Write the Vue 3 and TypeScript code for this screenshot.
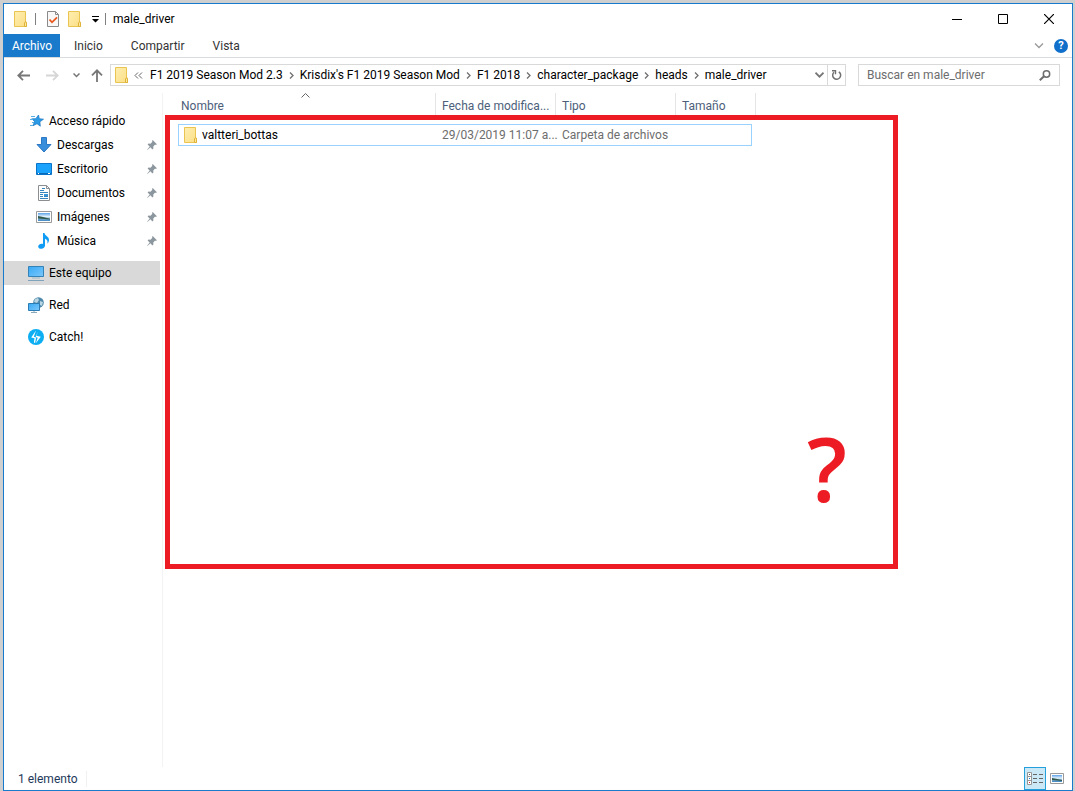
<script setup lang="ts">
import { ref } from 'vue'

interface NavItem {
  label: string
  icon: string
}

const tabs: string[] = ['Inicio', 'Compartir', 'Vista']
const crumbs: string[] = [
  'F1 2019 Season Mod 2.3',
  "Krisdix's F1 2019 Season Mod",
  'F1 2018',
  'character_package',
  'heads',
  'male_driver',
]
const pinned: NavItem[] = [
  { label: 'Descargas', icon: 'i-down' },
  { label: 'Escritorio', icon: 'i-desktop' },
  { label: 'Documentos', icon: 'i-doc' },
  { label: 'Imágenes', icon: 'i-image' },
  { label: 'Música', icon: 'i-music' },
]
const places: NavItem[] = [
  { label: 'Este equipo', icon: 'i-pc' },
  { label: 'Red', icon: 'i-net' },
  { label: 'Catch!', icon: 'i-catch' },
]
const selected = ref('Este equipo')
const query = ref('')
</script>

<template>
  <svg class="defs" aria-hidden="true">
    <defs>
      <linearGradient id="g-blue" x1="0" y1="0" x2="1" y2="1">
        <stop offset="0" stop-color="#37a9f5" />
        <stop offset="1" stop-color="#7cc8fb" />
      </linearGradient>
      <linearGradient id="g-folder" x1="0" y1="0" x2="1" y2="1">
        <stop offset="0" stop-color="#ffeeb0" />
        <stop offset="1" stop-color="#fbdf86" />
      </linearGradient>
      <linearGradient id="g-photo" x1="0" y1="0" x2="0" y2="1">
        <stop offset="0" stop-color="#5aa2ea" />
        <stop offset="0.45" stop-color="#e6f3fb" />
        <stop offset="0.7" stop-color="#7fb0cf" />
        <stop offset="1" stop-color="#3f86c4" />
      </linearGradient>
    </defs>
    <symbol id="i-folder" viewBox="0 0 16 16">
      <path d="M1.500.5h11v10.500h1v4.500h-12z" fill="url(#g-folder)" stroke="#e9c451" />
      <path d="M11.500 15.500v-3.500l1-1.500 1 1.500v3.500z" fill="#fde99f" stroke="#dfb33a" />
    </symbol>
    <symbol id="i-star" viewBox="0 0 16 16">
      <path d="M10.500 2l.8 3.700 4.200.5-3.600 2.600.4 4.400-3.300-2.500-4 2 1.500-4.300-2.700-2.600 4-.1z" fill="#2b9be8" stroke="#1a75bd" stroke-width=".7" />
      <path d="M3 3.500h4M2 6.500h3M4 9.500h2M2 12.500h3" stroke="#59aee6" />
    </symbol>
    <symbol id="i-down" viewBox="0 0 16 16">
      <path d="M5.500.5h5v7h4.500l-7 7.500-7-7.500h4.500z" fill="#3a8fdd" stroke="#2c78c2" />
    </symbol>
    <symbol id="i-desktop" viewBox="0 0 16 16">
      <path d="M.5 2.500h15v11h-15z" fill="#1aa2fc" stroke="#0a74c9" />
      <path d="M1 12.500h14" stroke="#0b68b5" />
      <path d="M2 12.500h1M12 12.500h2" stroke="#fff" />
    </symbol>
    <symbol id="i-doc" viewBox="0 0 16 16">
      <path d="M2.500.5h8l3 3v12h-11z" fill="#fff" stroke="#8c8f92" />
      <path d="M10.500.5v3h3" fill="none" stroke="#8c8f92" />
      <path d="M6 3.500h3M4 5.500h4M4 7.500h8M4 9.500h3M8 9.500h4M4 11.500h3M8 11.500h4M4 13.500h8" stroke="#3584bd" />
      <path d="M8 9h4v2h-4z" fill="#3b94d6" />
    </symbol>
    <symbol id="i-image" viewBox="0 0 16 16">
      <path d="M.5 2.500h15v11h-15z" fill="#fff" stroke="#9a9a9a" />
      <path d="M2 4h12v8h-12z" fill="url(#g-photo)" />
      <path d="M2 7l4 .8 8 2v.7l-12-1z" fill="#31594d" />
    </symbol>
    <symbol id="i-music" viewBox="0 0 16 16">
      <path d="M7 0h1.500c.2 2.500 4.700 3.500 4.500 7-.1 1.700-.8 2.800-1.700 3.700.8-2.700-.3-4.300-2.300-5v6.800c0 1.900-1.600 3.100-3.600 3.300-1.800.1-3.200-.8-3.200-2.300 0-1.800 2.600-3.200 4.800-2.500z" fill="#109bf5" />
    </symbol>
    <symbol id="i-pc" viewBox="0 0 16 16">
      <path d="M.5 1.500h15v10h-15z" fill="url(#g-blue)" stroke="#3483b8" />
      <path d="M4 13h8" stroke="#9db9ca" />
      <path d="M0 15.500h16" stroke="#7fa3bd" />
    </symbol>
    <symbol id="i-net" viewBox="0 0 16 16">
      <circle cx="10.500" cy="5.500" r="5.300" fill="#4d87aa" />
      <path d="M7 2l3-1 1 2-2 3-3-1zM12 4l3 1-1 4-2-1z" fill="#b7d5e2" />
      <path d="M.5 6.500h11v7h-11z" fill="url(#g-blue)" stroke="#2b7cb5" />
      <path d="M6 14v1M3 15.500h6" stroke="#8aa9bb" />
    </symbol>
    <symbol id="i-catch" viewBox="0 0 16 16">
      <circle cx="8" cy="8" r="8" fill="#0eaef2" />
      <path d="M8 1.500L3.200 8.400l3.300.9-.6 4.200 1.200.5 1-5.600-2.300-.6z" fill="#fff" />
      <path d="M9.800 2.200l-1.300 4.600 4.300.9-5 6.600 1.900-5.500-2-.7z" fill="#fff" />
    </symbol>
    <symbol id="i-pin" viewBox="0 0 10 10">
      <path d="M5.700 0l4.200 4.200-1 .7-.8-.3-1.800 1.900.1 2-1 .9-2-2.100-3.100 2.600-.2-.2 2.600-3.100-2.100-2 .9-1 2 .1 1.900-1.900-.4-.8z" fill="#8b969e" />
    </symbol>
    <symbol id="i-crumb" viewBox="0 0 5 7">
      <path d="M1 .5l3 3-3 3" fill="none" stroke="#707070" stroke-width="1.300" />
    </symbol>
  </svg>

  <main class="window">
    <header class="titlebar">
      <svg class="icon"><use href="#i-folder" /></svg>
      <span class="bar"></span>
      <button class="quick" type="button" aria-label="Propiedades">
        <svg class="icon" viewBox="0 0 16 16">
          <path d="M2.500.5h8l3 3v12h-11z" fill="#f8f8f8" stroke="#8a8a8a" />
          <path d="M10.500.5v3h3" fill="none" stroke="#8a8a8a" />
          <path d="M4.500 8.500l2.500 2.800 5-5" fill="none" stroke="#e8571c" stroke-width="1.800" />
        </svg>
      </button>
      <button class="quick" type="button" aria-label="Nueva carpeta">
        <svg class="icon"><use href="#i-folder" /></svg>
      </button>
      <button class="more" type="button" aria-label="Personalizar barra">
        <svg width="7" height="7" viewBox="0 0 7 7"><path d="M0 0h7v1H0zM0 3h7L3.500 6.500z" fill="#000" /></svg>
      </button>
      <span class="bar"></span>
      <h1>male_driver</h1>
      <div class="controls">
        <button type="button" aria-label="Minimizar">
          <svg width="10" height="10"><path d="M0 5.500h10" stroke="#000" /></svg>
        </button>
        <button type="button" aria-label="Maximizar">
          <svg width="10" height="10"><path d="M.5.5h9v9h-9z" fill="none" stroke="#000" /></svg>
        </button>
        <button type="button" aria-label="Cerrar">
          <svg width="10" height="10"><path d="M0 0l10 10M10 0L0 10" stroke="#000" stroke-width="1.200" /></svg>
        </button>
      </div>
    </header>

    <nav class="ribbon" aria-label="Cinta">
      <button class="file" type="button">Archivo</button>
      <button v-for="tab in tabs" :key="tab" type="button">{{ tab }}</button>
      <div class="ribbon-end">
        <button class="plain" type="button" aria-label="Expandir cinta">
          <svg width="10" height="6"><path d="M1 .5l4 4 4-4" fill="none" stroke="#999" stroke-width="1.300" /></svg>
        </button>
        <button class="help" type="button" aria-label="Ayuda">?</button>
      </div>
    </nav>

    <div class="address-row">
      <button class="plain back" type="button" aria-label="Atrás">
        <svg width="13" height="11"><path d="M6 .8L1.300 5.500 6 10.200M1.500 5.500H13" fill="none" stroke="#777" stroke-width="1.800" /></svg>
      </button>
      <button class="plain forward" type="button" aria-label="Adelante">
        <svg width="13" height="11"><path d="M7 .8l4.700 4.700L7 10.200M11.500 5.500H0" fill="none" stroke="#d6d6d6" stroke-width="1.800" /></svg>
      </button>
      <button class="plain recent" type="button" aria-label="Ubicaciones recientes">
        <svg width="7" height="5"><path d="M.5.5l3 3 3-3" fill="none" stroke="#777" stroke-width="1.500" /></svg>
      </button>
      <button class="plain up" type="button" aria-label="Subir">
        <svg width="12" height="13"><path d="M1 6.300l5-5 5 5M6 1.500V13" fill="none" stroke="#777" stroke-width="1.800" /></svg>
      </button>
      <div class="address">
        <svg class="icon"><use href="#i-folder" /></svg>
        <svg class="chevrons" width="9" height="7"><path d="M4 .5l-3 3 3 3M8 .5l-3 3 3 3" fill="none" stroke="#666" /></svg>
        <ol>
          <li v-for="(crumb, i) in crumbs" :key="crumb">
            <svg v-if="i > 0" class="sep"><use href="#i-crumb" /></svg>
            <a href="#">{{ crumb }}</a>
          </li>
        </ol>
        <button class="drop" type="button" aria-label="Ubicaciones anteriores">
          <svg width="9" height="6"><path d="M.5.700l4 4 4-4" fill="none" stroke="#777" stroke-width="1.700" /></svg>
        </button>
        <button class="refresh" type="button" aria-label="Actualizar">
          <svg width="11" height="12" viewBox="0 0 11 12">
            <path d="M7.800 2.800a4 4 0 1 1-4.800.4" fill="none" stroke="#707070" stroke-width="1.500" />
            <path d="M1 1.700h3.500v3.600" fill="none" stroke="#707070" stroke-width="1.400" />
          </svg>
        </button>
      </div>
      <label class="search">
        <input v-model="query" type="text" placeholder="Buscar en male_driver" aria-label="Buscar en male_driver" />
        <svg width="12" height="11" viewBox="0 0 12 11">
          <circle cx="7.500" cy="4" r="3.200" fill="none" stroke="#6d6d6d" stroke-width="1.500" />
          <path d="M5 6.300L.8 10.300" stroke="#6d6d6d" stroke-width="2" />
        </svg>
      </label>
    </div>

    <div class="body">
      <nav class="sidebar" aria-label="Navegación">
        <a class="item" href="#"><svg class="icon"><use href="#i-star" /></svg>Acceso rápido</a>
        <a v-for="item in pinned" :key="item.label" class="item child" href="#">
          <svg class="icon"><use :href="'#' + item.icon" /></svg>{{ item.label }}
          <svg class="pin"><use href="#i-pin" /></svg>
        </a>
        <a
          v-for="item in places"
          :key="item.label"
          class="item place"
          :class="{ selected: item.label === selected }"
          href="#"
          @click.prevent="selected = item.label"
        >
          <svg class="icon"><use :href="'#' + item.icon" /></svg>{{ item.label }}
        </a>
      </nav>

      <section class="content">
        <table>
          <colgroup>
            <col class="c-name" />
            <col class="c-mid" />
            <col class="c-mid" />
            <col class="c-size" />
            <col class="c-end" />
          </colgroup>
          <thead>
            <tr>
              <th scope="col">
                <span>Nombre</span>
                <svg class="sort" width="9" height="5"><path d="M.5 4.500l4-4 4 4" fill="none" stroke="#666" /></svg>
              </th>
              <th scope="col"><span>Fecha de modifica...</span></th>
              <th scope="col"><span>Tipo</span></th>
              <th scope="col" colspan="2"><span>Tamaño</span></th>
            </tr>
          </thead>
          <tbody>
            <tr>
              <td><div class="file-name"><svg class="icon"><use href="#i-folder" /></svg>valtteri_bottas</div></td>
              <td>29/03/2019 11:07 a...</td>
              <td>Carpeta de archivos</td>
              <td></td>
            </tr>
          </tbody>
        </table>
        <div class="mark"><span>?</span></div>
      </section>
    </div>

    <footer class="status">
      <span class="count">1 elemento</span>
      <div class="views">
        <button class="view on" type="button" aria-label="Detalles">
          <svg width="16" height="13" viewBox="0 0 16 13">
            <path d="M.5.5h4v12h-4zM.5 4.500h4M.5 8.500h4" fill="#fff" stroke="#969696" />
            <path d="M6 2.500h4M12 2.500h4M6 6.500h4M12 6.500h4M6 10.500h4M12 10.500h4" stroke="#666" />
            <path d="M2 2h1v1H2z" fill="#555" /><path d="M2 6h1v1H2z" fill="#1683e0" /><path d="M2 10h1v1H2z" fill="#d22" />
          </svg>
        </button>
        <button class="view" type="button" aria-label="Iconos grandes">
          <svg width="14" height="11" viewBox="0 0 14 11">
            <path d="M.5.5h13v10h-13z" fill="#fff" stroke="#999" />
            <path d="M2 2h10v7H2z" fill="url(#g-photo)" />
            <path d="M2 5l4 .8 6 1.200v1l-10-1z" fill="#31594d" />
          </svg>
        </button>
      </div>
    </footer>
  </main>
</template>

<style>
body {
  background: #cfcfcf;
}
</style>

<style scoped>
* {
  box-sizing: border-box;
}

.defs {
  position: absolute;
  width: 0;
  height: 0;
}

.window {
  display: flex;
  flex-direction: column;
  min-height: calc(100vh - 3px);
  margin: 3px 2px 0 3px;
  border: 1px solid #1979ca;
  background: #fff;
  color: #000;
  font: 12px/16px Roboto, "Open Sans", sans-serif;
}

button {
  display: flex;
  align-items: center;
  justify-content: center;
  margin: 0;
  padding: 0;
  border: 0;
  background: none;
  color: inherit;
  font: inherit;
}

a {
  color: inherit;
  text-decoration: none;
}

svg {
  display: block;
  flex: none;
}

.icon {
  width: 16px;
  height: 16px;
}

.titlebar {
  display: flex;
  align-items: center;
  height: 30px;
  padding-left: 9px;
}

.bar {
  width: 1px;
  height: 12px;
  margin: 0 9px 0 6px;
  background: #808080;
}

.quick {
  width: 22px;
  height: 22px;
  justify-content: flex-start;
}

.more {
  width: 12px;
  height: 22px;
}

.more + .bar {
  margin: 0 7px 0 4px;
}

h1 {
  margin: 0;
  font-size: 12px;
  font-weight: 400;
}

.controls {
  display: flex;
  margin-left: auto;
}

.controls button {
  width: 46px;
  height: 29px;
}

.ribbon {
  display: flex;
  height: 24px;
  border-bottom: 1px solid #dadbdc;
  color: #333;
}

.ribbon > button {
  padding: 0 14px;
}

.ribbon > .file {
  padding: 0;
  width: 56px;
  background: #1979ca;
  color: #fff;
}

.ribbon-end {
  display: flex;
  align-items: center;
  gap: 10px;
  margin-left: auto;
  padding-right: 4px;
}

.help {
  width: 14px;
  height: 14px;
  border-radius: 50%;
  background: #0f6fcb;
  color: #fff;
  font-size: 11px;
  font-weight: 700;
}

.address-row {
  display: flex;
  align-items: center;
  height: 35px;
  padding: 0 12px 1px 13px;
}

.forward {
  margin-left: 16px;
}

.recent {
  margin-left: 14px;
}

.up {
  margin-left: 11px;
}

.address {
  display: flex;
  align-items: center;
  flex: 1;
  min-width: 0;
  height: 22px;
  margin: 0 12px 0 7px;
  padding-left: 3px;
  border: 1px solid #d9d9d9;
}

.chevrons {
  margin: 0 7px 0 4px;
}

ol {
  display: flex;
  flex: 1;
  min-width: 0;
  margin: 0;
  padding: 0;
  list-style: none;
  white-space: nowrap;
}

li {
  display: flex;
  align-items: center;
}

.sep {
  width: 5px;
  height: 7px;
  margin: 0 6px;
}

.drop {
  width: 16px;
  height: 20px;
}

.refresh {
  width: 18px;
  height: 20px;
  border-left: 1px solid #d9d9d9;
}

.search {
  display: flex;
  flex: none;
  align-items: center;
  width: 202px;
  height: 22px;
  padding: 0 8px;
  border: 1px solid #d9d9d9;
}

.search input {
  flex: 1;
  min-width: 0;
  padding: 0;
  border: 0;
  outline: 0;
  background: none;
  color: #6d6d6d;
  font: inherit;
}

.search input::placeholder {
  color: #6d6d6d;
  opacity: 1;
}

.body {
  display: flex;
  flex: 1;
}

.sidebar {
  width: 159px;
  padding: 16px 2px 0 0;
  border-right: 1px solid #f3f3f3;
}

.item {
  display: flex;
  align-items: center;
  gap: 5px;
  height: 24px;
  padding-left: 24px;
}

.child {
  padding-left: 32px;
}

.pin {
  width: 10px;
  height: 10px;
  margin: 0 3px 0 auto;
}

.place {
  margin-top: 8px;
}

.selected {
  background: #d9d9d9;
}

.content {
  position: relative;
  flex: 1;
  padding-left: 15px;
}

table {
  border-collapse: separate;
  border-spacing: 0;
  table-layout: fixed;
  width: 578px;
}

.c-name {
  width: 258px;
}

.c-mid {
  width: 120px;
}

.c-size {
  width: 76px;
}

.c-end {
  width: 4px;
}

th {
  position: relative;
  padding: 0 0 7px;
  color: #4c607a;
  font-weight: 400;
  text-align: left;
  white-space: nowrap;
}

th span {
  display: block;
  height: 24px;
  padding-left: 6px;
  border-right: 1px solid #e5e5e5;
  line-height: 26px;
}

th:first-child span {
  padding-left: 3px;
}

.sort {
  position: absolute;
  top: 0;
  left: 123px;
}

td {
  height: 22px;
  padding: 0 0 0 6px;
  border: 1px solid #99d1ff;
  border-width: 1px 0;
  color: #6d6d6d;
  white-space: nowrap;
}

td:first-child {
  padding-left: 4px;
  border-left-width: 1px;
  color: #000;
}

td:last-child {
  border-right-width: 1px;
}

.file-name {
  display: flex;
  align-items: center;
  gap: 3px;
}

/* Highlight frame drawn over the file list */
.mark {
  position: absolute;
  top: 22px;
  left: 2px;
  display: flex;
  align-items: flex-end;
  justify-content: flex-end;
  width: 733px;
  height: 454px;
  padding: 0 46px 43px 0;
  border: 5px solid #ed1c24;
  color: #ed1c24;
  font: 600 88px/106px "Open Sans", sans-serif;
  pointer-events: none;
}

.status {
  display: flex;
  align-items: center;
  justify-content: space-between;
  height: 23px;
  padding: 0 4px 0 14px;
  color: #1e395b;
}

.count {
  padding-right: 8px;
  border-right: 1px solid #f0f0f0;
}

.views {
  display: flex;
}

.view {
  width: 22px;
  height: 23px;
}

.on {
  border: 1px solid #26a0da;
  background: #cbe8f6;
}
</style>
